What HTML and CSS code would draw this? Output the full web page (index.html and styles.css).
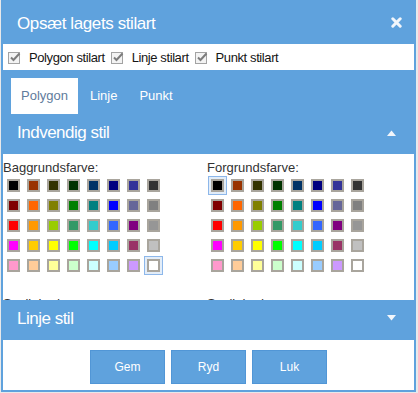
FILE: index.html
```html
<!DOCTYPE html>
<html lang="da">
<head>
<meta charset="utf-8">
<title>Opsæt lagets stilart</title>
<link rel="stylesheet" href="styles.css">
</head>
<body>
<div class="dialog">
  <div class="titlebar">
    <span class="title">Opsæt lagets stilart</span>
    <svg class="close" width="11" height="11" viewBox="0 0 11 11"><path d="M1.8 1.8 L9.2 9.2 M9.2 1.8 L1.8 9.2" stroke="#f2f6fb" stroke-width="3" stroke-linecap="round"/></svg>
  </div>
  <div class="checks">
    <label class="check"><svg class="cb" width="14" height="13" viewBox="0 0 14 13"><rect x="0.5" y="1.5" width="11" height="11" fill="#f3f3f3" stroke="#a3a3a3"/><path d="M3 6.5 L5.5 9 L11.5 2.5" fill="none" stroke="#7c7c7c" stroke-width="2"/></svg><span>Polygon stilart</span></label>
    <label class="check"><svg class="cb" width="14" height="13" viewBox="0 0 14 13"><rect x="0.5" y="1.5" width="11" height="11" fill="#f3f3f3" stroke="#a3a3a3"/><path d="M3 6.5 L5.5 9 L11.5 2.5" fill="none" stroke="#7c7c7c" stroke-width="2"/></svg><span>Linje stilart</span></label>
    <label class="check"><svg class="cb" width="14" height="13" viewBox="0 0 14 13"><rect x="0.5" y="1.5" width="11" height="11" fill="#f3f3f3" stroke="#a3a3a3"/><path d="M3 6.5 L5.5 9 L11.5 2.5" fill="none" stroke="#7c7c7c" stroke-width="2"/></svg><span>Punkt stilart</span></label>
  </div>
  <div class="tabs">
    <span class="tab active">Polygon</span>
    <span class="tab">Linje</span>
    <span class="tab">Punkt</span>
  </div>
  <div class="section-header">
    <span class="section-title">Indvendig stil</span>
    <svg class="caret caret-up" width="9" height="6" viewBox="0 0 9 6"><path d="M0 6 L4.5 0.5 L9 6 Z" fill="#f2f6fb"/></svg>
  </div>
  <div class="content">
    <div class="col">
      <div class="label">Baggrundsfarve:</div>
      <div class="grid">
        <div class="cell"><div class="sw" style="background:#000000"></div></div>
        <div class="cell"><div class="sw" style="background:#993300"></div></div>
        <div class="cell"><div class="sw" style="background:#333300"></div></div>
        <div class="cell"><div class="sw" style="background:#003300"></div></div>
        <div class="cell"><div class="sw" style="background:#003366"></div></div>
        <div class="cell"><div class="sw" style="background:#000080"></div></div>
        <div class="cell"><div class="sw" style="background:#333399"></div></div>
        <div class="cell"><div class="sw" style="background:#333333"></div></div>
        <div class="cell"><div class="sw" style="background:#800000"></div></div>
        <div class="cell"><div class="sw" style="background:#ff6600"></div></div>
        <div class="cell"><div class="sw" style="background:#808000"></div></div>
        <div class="cell"><div class="sw" style="background:#008000"></div></div>
        <div class="cell"><div class="sw" style="background:#008080"></div></div>
        <div class="cell"><div class="sw" style="background:#0000ff"></div></div>
        <div class="cell"><div class="sw" style="background:#666699"></div></div>
        <div class="cell"><div class="sw" style="background:#808080"></div></div>
        <div class="cell"><div class="sw" style="background:#ff0000"></div></div>
        <div class="cell"><div class="sw" style="background:#ff9900"></div></div>
        <div class="cell"><div class="sw" style="background:#99cc00"></div></div>
        <div class="cell"><div class="sw" style="background:#339966"></div></div>
        <div class="cell"><div class="sw" style="background:#33cccc"></div></div>
        <div class="cell"><div class="sw" style="background:#3366ff"></div></div>
        <div class="cell"><div class="sw" style="background:#800080"></div></div>
        <div class="cell"><div class="sw" style="background:#969696"></div></div>
        <div class="cell"><div class="sw" style="background:#ff00ff"></div></div>
        <div class="cell"><div class="sw" style="background:#ffcc00"></div></div>
        <div class="cell"><div class="sw" style="background:#ffff00"></div></div>
        <div class="cell"><div class="sw" style="background:#00ff00"></div></div>
        <div class="cell"><div class="sw" style="background:#00ffff"></div></div>
        <div class="cell"><div class="sw" style="background:#00ccff"></div></div>
        <div class="cell"><div class="sw" style="background:#993366"></div></div>
        <div class="cell"><div class="sw" style="background:#c0c0c0"></div></div>
        <div class="cell"><div class="sw" style="background:#ff99cc"></div></div>
        <div class="cell"><div class="sw" style="background:#ffcc99"></div></div>
        <div class="cell"><div class="sw" style="background:#ffff99"></div></div>
        <div class="cell"><div class="sw" style="background:#ccffcc"></div></div>
        <div class="cell"><div class="sw" style="background:#ccffff"></div></div>
        <div class="cell"><div class="sw" style="background:#99ccff"></div></div>
        <div class="cell"><div class="sw" style="background:#cc99ff"></div></div>
        <div class="cell sel"><div class="sw" style="background:#ffffff"></div></div>
      </div>
      <div class="label">Synlighed:</div>
    </div>
    <div class="col">
      <div class="label">Forgrundsfarve:</div>
      <div class="grid">
        <div class="cell sel"><div class="sw" style="background:#000000"></div></div>
        <div class="cell"><div class="sw" style="background:#993300"></div></div>
        <div class="cell"><div class="sw" style="background:#333300"></div></div>
        <div class="cell"><div class="sw" style="background:#003300"></div></div>
        <div class="cell"><div class="sw" style="background:#003366"></div></div>
        <div class="cell"><div class="sw" style="background:#000080"></div></div>
        <div class="cell"><div class="sw" style="background:#333399"></div></div>
        <div class="cell"><div class="sw" style="background:#333333"></div></div>
        <div class="cell"><div class="sw" style="background:#800000"></div></div>
        <div class="cell"><div class="sw" style="background:#ff6600"></div></div>
        <div class="cell"><div class="sw" style="background:#808000"></div></div>
        <div class="cell"><div class="sw" style="background:#008000"></div></div>
        <div class="cell"><div class="sw" style="background:#008080"></div></div>
        <div class="cell"><div class="sw" style="background:#0000ff"></div></div>
        <div class="cell"><div class="sw" style="background:#666699"></div></div>
        <div class="cell"><div class="sw" style="background:#808080"></div></div>
        <div class="cell"><div class="sw" style="background:#ff0000"></div></div>
        <div class="cell"><div class="sw" style="background:#ff9900"></div></div>
        <div class="cell"><div class="sw" style="background:#99cc00"></div></div>
        <div class="cell"><div class="sw" style="background:#339966"></div></div>
        <div class="cell"><div class="sw" style="background:#33cccc"></div></div>
        <div class="cell"><div class="sw" style="background:#3366ff"></div></div>
        <div class="cell"><div class="sw" style="background:#800080"></div></div>
        <div class="cell"><div class="sw" style="background:#969696"></div></div>
        <div class="cell"><div class="sw" style="background:#ff00ff"></div></div>
        <div class="cell"><div class="sw" style="background:#ffcc00"></div></div>
        <div class="cell"><div class="sw" style="background:#ffff00"></div></div>
        <div class="cell"><div class="sw" style="background:#00ff00"></div></div>
        <div class="cell"><div class="sw" style="background:#00ffff"></div></div>
        <div class="cell"><div class="sw" style="background:#00ccff"></div></div>
        <div class="cell"><div class="sw" style="background:#993366"></div></div>
        <div class="cell"><div class="sw" style="background:#c0c0c0"></div></div>
        <div class="cell"><div class="sw" style="background:#ff99cc"></div></div>
        <div class="cell"><div class="sw" style="background:#ffcc99"></div></div>
        <div class="cell"><div class="sw" style="background:#ffff99"></div></div>
        <div class="cell"><div class="sw" style="background:#ccffcc"></div></div>
        <div class="cell"><div class="sw" style="background:#ccffff"></div></div>
        <div class="cell"><div class="sw" style="background:#99ccff"></div></div>
        <div class="cell"><div class="sw" style="background:#cc99ff"></div></div>
        <div class="cell"><div class="sw" style="background:#ffffff"></div></div>
      </div>
      <div class="label">Synlighed:</div>
    </div>
  </div>
  <div class="section-header">
    <span class="section-title">Linje stil</span>
    <svg class="caret caret-down" width="9" height="6" viewBox="0 0 9 6"><path d="M0 0 L4.5 5.5 L9 0 Z" fill="#f2f6fb"/></svg>
  </div>
  <div class="footer">
    <button class="btn">Gem</button>
    <button class="btn">Ryd</button>
    <button class="btn">Luk</button>
  </div>
</div>
</body>
</html>
```

FILE: styles.css
```css
html, body {
  margin: 0;
  padding: 0;
}
body {
  background: #e8e9ea;
  font-family: "Liberation Sans", Arial, sans-serif;
  width: 418px;
  height: 393px;
  overflow: hidden;
}
.dialog {
  margin-left: 1px;
  width: 415px;
  height: 392px;
  box-sizing: border-box;
  background: #5fa2dd;
  padding: 0 2px 2px 2px;
  display: flex;
  flex-direction: column;
  overflow: hidden;
}
.titlebar {
  height: 44px;
  box-sizing: border-box;
  padding: 14px 12px 10px 14px;
  display: flex;
  justify-content: space-between;
  align-items: flex-start;
  flex-shrink: 0;
}
.title {
  color: #fff;
  font-size: 17px;
  line-height: 20px;
  letter-spacing: -0.4px;
}
.close {
  margin-top: 3px;
  display: block;
}
.checks {
  background: #fff;
  height: 26px;
  flex-shrink: 0;
  display: flex;
  align-items: center;
  padding-left: 5px;
}
.check {
  display: flex;
  align-items: center;
  margin-right: 6px;
  font-size: 13px;
  line-height: 15px;
  letter-spacing: -0.4px;
  color: #161616;
}
.cb {
  display: block;
  margin-right: 7px;
}
.tabs {
  height: 44px;
  box-sizing: border-box;
  flex-shrink: 0;
  padding: 8px 0 0 8px;
  display: flex;
  gap: 2px;
}
.tab {
  padding: 10px 10px 11px 10px;
  font-size: 13px;
  line-height: 15px;
  color: #fff;
}
.tab.active {
  background: #fff;
  color: #5f7b9c;
}
.section-header {
  height: 40px;
  box-sizing: border-box;
  flex-shrink: 0;
  padding: 9px 18px 11px 14px;
  display: flex;
  justify-content: space-between;
  align-items: flex-start;
}
.section-title {
  color: #fff;
  font-size: 17px;
  line-height: 20px;
  letter-spacing: -0.5px;
}
.caret {
  display: block;
}
.caret-up {
  margin-top: 7px;
}
.caret-down {
  margin-top: 6px;
}
.content {
  background: #fff;
  height: 146px;
  box-sizing: border-box;
  flex-shrink: 0;
  overflow: hidden;
  padding-top: 6px;
  display: flex;
}
.col {
  width: 204px;
  flex-shrink: 0;
}
.label {
  font-size: 13px;
  line-height: 16px;
  color: #333;
}
.grid {
  display: grid;
  grid-template-columns: repeat(8, 19px);
  grid-auto-rows: 19px;
  gap: 1px;
  margin: 0 0 21px 1px;
}
.cell {
  width: 19px;
  height: 19px;
  box-sizing: border-box;
  padding: 2px;
  border: 1px solid transparent;
}
.cell.sel {
  border-color: #8db7ea;
  background: #e3edf8;
}
.sw {
  width: 13px;
  height: 13px;
  box-sizing: border-box;
  border: 2px solid #a9a59d;
}
.footer {
  flex: 1;
  background: #fff;
  display: flex;
  justify-content: center;
  align-items: flex-start;
  gap: 6px;
  padding-top: 10px;
}
.btn {
  width: 75px;
  height: 34px;
  box-sizing: border-box;
  background: #5fa2dd;
  border: 1px solid #5196d6;
  color: #fff;
  font-family: "Liberation Sans", Arial, sans-serif;
  font-size: 12px;
  padding: 0;
  margin: 0;
}
```
